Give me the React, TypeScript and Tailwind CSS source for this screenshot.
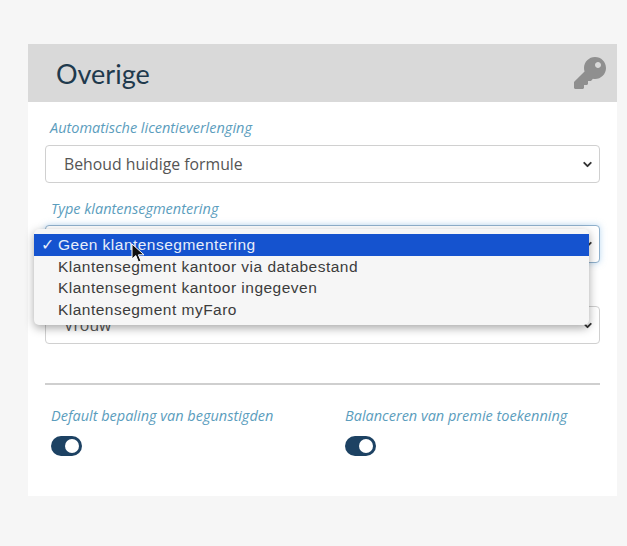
import { FaKey } from "react-icons/fa";
import { ChevronDown } from "lucide-react";

const labelClass = "block text-[14.5px] leading-[16px] italic text-[#5b9dbd] font-['Open_Sans',sans-serif]";

function FakeSelect({ value, focused }: { value: string; focused?: boolean }) {
  return (
    <div
      className={`flex h-[38px] items-center justify-between rounded-[4px] border bg-white pl-[18px] pr-[5px] font-['Open_Sans',sans-serif] text-[15.8px] text-[#555] ${
        focused ? "border-[#8fb0cc] shadow-[0_0_6px_rgba(120,180,230,0.5)]" : "border-[#d0d0d0]"
      }`}
    >
      <span className="translate-y-[1px]">{value}</span>
      <ChevronDown size={13} strokeWidth={3.5} className="text-[#333]" />
    </div>
  );
}

function Toggle() {
  return (
    <div className="flex h-[20px] w-[31px] items-center justify-end rounded-full bg-[#1d4263] pr-[3px]">
      <div className="h-[14px] w-[14px] rounded-full bg-white" />
    </div>
  );
}

const options = [
  "Klantensegment kantoor via databestand",
  "Klantensegment kantoor ingegeven",
  "Klantensegment myFaro",
];

export default function App() {
  return (
    <div className="h-[546px] w-[627px] overflow-hidden bg-[#f6f6f6] pl-[28px] pr-[10px] pt-[44px] font-['Lato',sans-serif]">
      <div className="h-[452px] bg-white">
        <div className="flex h-[58px] items-center justify-between bg-[#d9d9d9] pl-[28px] pr-[11px]">
          <h1 className="text-[27px] leading-none text-[#1f3a4d]">Overige</h1>
          <FaKey size={32} className="text-[#8f8f8f]" />
        </div>

        <div className="px-[17px] pt-[18px]">
          <label className={`${labelClass} pl-[5px]`}>Automatische licentieverlenging</label>
          <div className="mt-[9px]">
            <FakeSelect value="Behoud huidige formule" />
          </div>

          <label className={`${labelClass} mt-[18px] pl-[6px]`}>Type klantensegmentering</label>
          <div className="relative mt-[8px]">
            <FakeSelect value="Geen klantensegmentering" focused />

            <div className="absolute left-[-11px] top-[4px] z-10 w-[555px] rounded-[5px] bg-[#f6f6f6] py-[5px] font-['Liberation_Sans',sans-serif] text-[15.5px] leading-[21.5px] tracking-[0.48px] text-[#3c3c3c] shadow-[0_3px_10px_rgba(0,0,0,0.35)]">
              <div className="relative bg-[#1553cf] pl-[24px] text-[#e8eefa]">
                <span className="absolute left-[7px]">✓</span>
                Geen klantensegmentering
              </div>
              {options.map((o) => (
                <div key={o} className="pl-[24px]">
                  {o}
                </div>
              ))}
              <svg className="absolute left-[97px] top-[14px]" width="15" height="20" viewBox="0 0 15 20">
                <path d="M1 1v15l3.8-3.4L7.4 19l2.6-1-2.6-6.2H13z" fill="#111" stroke="#fff" strokeWidth="1" />
              </svg>
            </div>
          </div>

          <div className="mt-[43px]">
            <FakeSelect value="Vrouw" />
          </div>

          <hr className="mt-[39px] border-t-2 border-[#cfcfcf]" />

          <div className="mt-[23px] grid grid-cols-[294px_1fr] pl-[6px]">
            <div>
              <label className={labelClass}>Default bepaling van begunstigden</label>
              <div className="mt-[12px]">
                <Toggle />
              </div>
            </div>
            <div>
              <label className={labelClass}>Balanceren van premie toekenning</label>
              <div className="mt-[12px]">
                <Toggle />
              </div>
            </div>
          </div>
        </div>
      </div>
    </div>
  );
}
